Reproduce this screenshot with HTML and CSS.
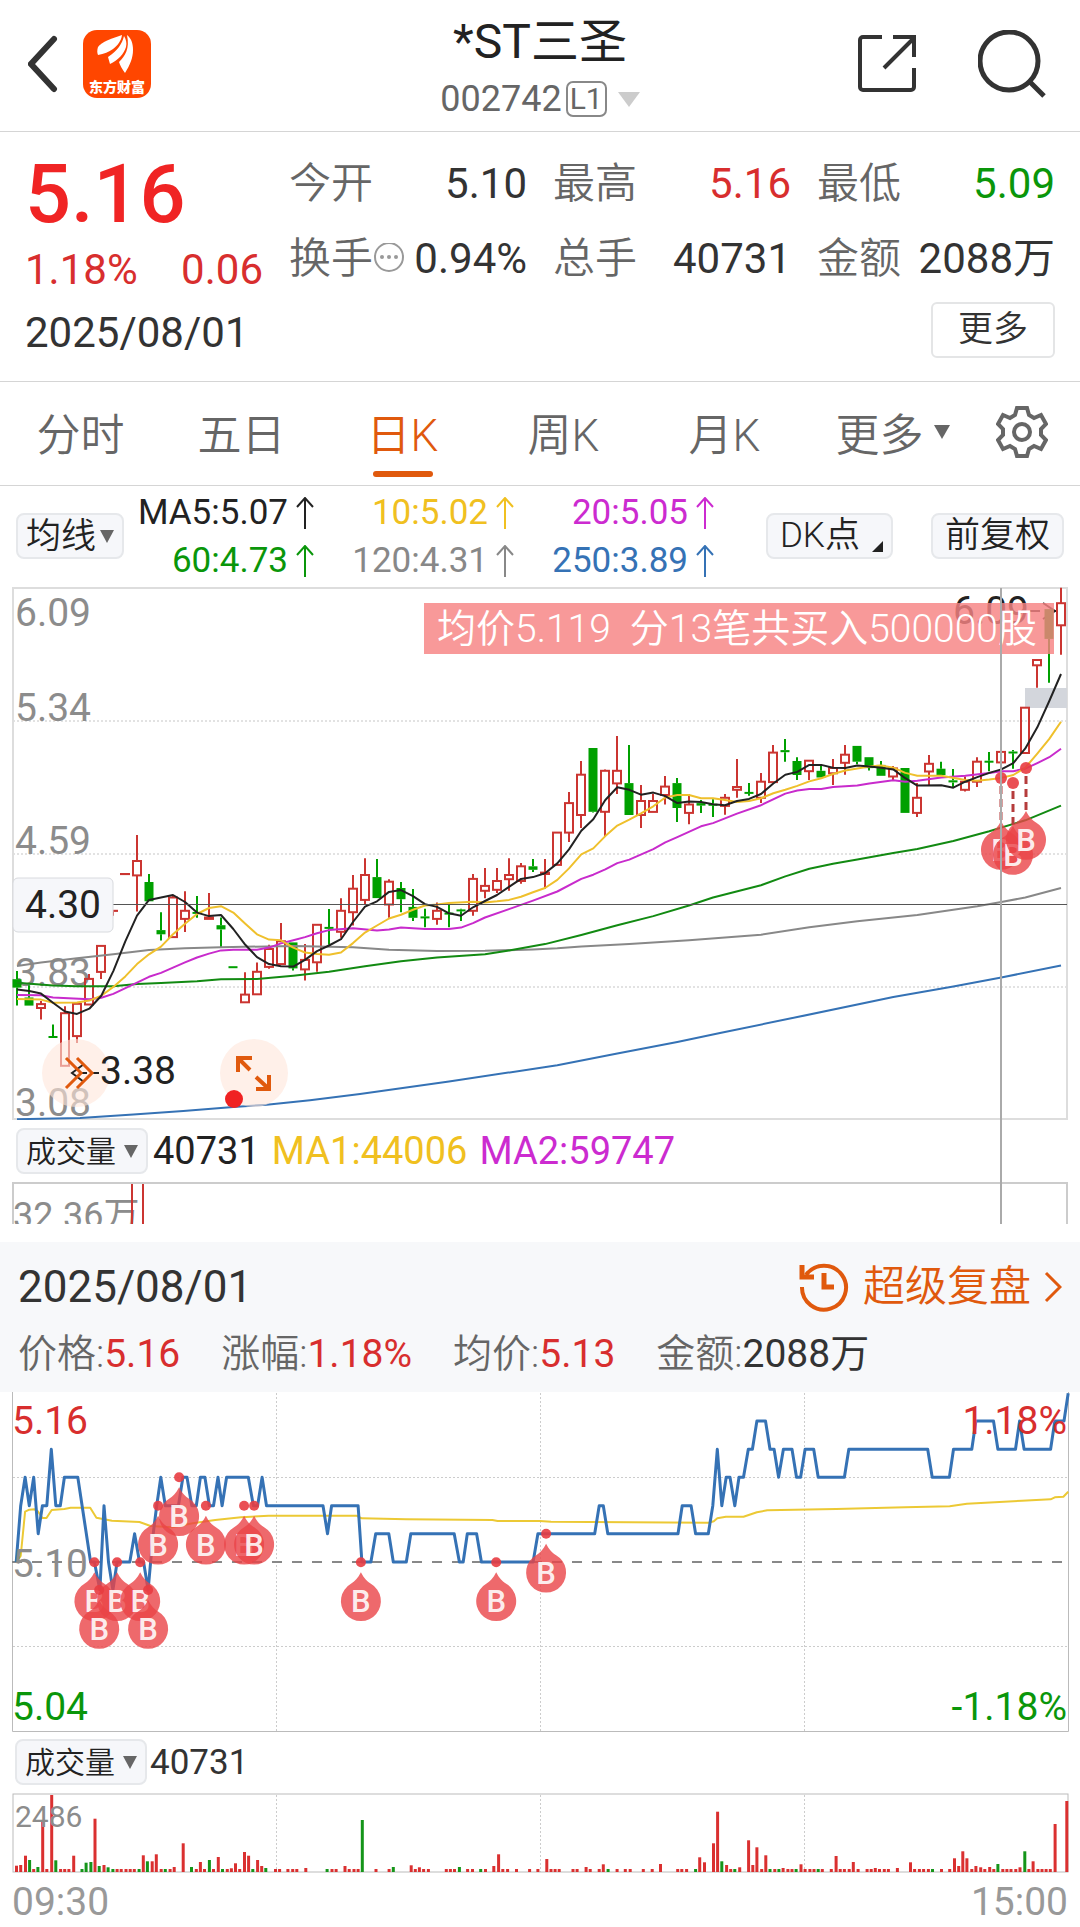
FILE: index.html
```html
<!DOCTYPE html>
<html lang="zh-CN">
<head>
<meta charset="utf-8">
<meta name="viewport" content="width=device-width, initial-scale=1">
<title>*ST三圣 002742</title>
<link rel="stylesheet" href="styles.css">
</head>
<body>
<header class="topbar">
  <div class="topbar-left">
    <button class="icon-btn" aria-label="返回"><svg width="30" height="60" viewBox="3 0 30 60"><path d="M29 5 6 30l23 25" fill="none" stroke="#333" stroke-width="6" stroke-linecap="round"/></svg></button>
    <svg class="logo" width="68" height="68" viewBox="0 0 68 68" role="img" aria-label="东方财富">
      <rect width="68" height="68" rx="14" fill="#ff4600"/>
      <path d="M39 5C30 8 18 12 15 17c-1 3-1 6 0 8 6-1 11-3 15-6 5-4 8-8 9-14z" fill="#fff"/>
      <path d="M41 6c-2 8-6 14-16 21l2 7c8-4 14-10 16-17 1-4 0-8-2-11z" fill="#fff"/>
      <path d="M44 5c4 3 6 8 6 15 0 8-3 15-8 23-3-4-5-8-6-11 6-6 11-13 8-27z" fill="#fff"/>
      <text x="34" y="62" text-anchor="middle" class="logo-text">东方财富</text>
    </svg>
  </div>
  <div class="topbar-title">
    <h1>*ST三圣</h1>
    <button class="code-btn"><span>002742</span><span class="level">L1</span><svg width="22" height="15" viewBox="0 0 22 15"><path d="M0 0h22L11 15z" fill="#ccc"/></svg></button>
  </div>
  <div class="topbar-right">
    <button class="icon-btn" aria-label="分享"><svg width="58" height="58" viewBox="0 0 58 58"><path d="M24 2H5a3 3 0 0 0-3 3v47a3 3 0 0 0 3 3h48a3 3 0 0 0 3-3V33M35 2h21v20M26 33 56 3" fill="none" stroke="#333" stroke-width="4"/></svg></button>
    <button class="icon-btn" aria-label="搜索"><svg width="68" height="68" viewBox="0 0 68 68"><circle cx="31" cy="31" r="29" fill="none" stroke="#333" stroke-width="5"/><path d="M51 51l15 15" stroke="#333" stroke-width="5"/></svg></button>
  </div>
</header>

<section class="quote">
  <div class="quote-main">
    <div class="quote-price">
      <strong>5.16</strong>
      <div class="change"><span>1.18%</span><span>0.06</span></div>
    </div>
    <div class="stats">
      <div><span class="name">今开</span><span>5.10</span></div>
      <div><span class="name">最高</span><span class="up">5.16</span></div>
      <div><span class="name">最低</span><span class="down">5.09</span></div>
      <div><span class="name">换手<svg width="32" height="32" viewBox="0 0 32 32"><circle cx="16" cy="14" r="14" fill="none" stroke="#999" stroke-width="2"/><g fill="#999"><circle cx="9" cy="14" r="2"/><circle cx="16" cy="14" r="2"/><circle cx="23" cy="14" r="2"/></g></svg></span><span>0.94%</span></div>
      <div><span class="name">总手</span><span>40731</span></div>
      <div><span class="name">金额</span><span>2088万</span></div>
    </div>
  </div>
  <div class="quote-foot"><time>2025/08/01</time><button class="more-btn">更多</button></div>
</section>

<nav class="tabs">
  <button>分时</button>
  <button>五日</button>
  <button class="active">日K</button>
  <button>周K</button>
  <button>月K</button>
  <button class="tab-more">更多<svg width="16" height="14" viewBox="0 0 16 14"><path d="M0 0h16L8 14z" fill="#666"/></svg></button>
  <button class="gear" aria-label="设置"><svg width="52" height="52" viewBox="-26 -26 52 52" fill="none" stroke="#666" stroke-width="4"><path d="M-5-24H5L7-17L12-14L19-17L24-8L19-3V3L24 8L19 17L12 14L7 17L5 24H-5L-7 17L-12 14L-19 17L-24 8L-19 3V-3L-24-8L-19-17L-12-14L-7-17Z"/><circle r="8"/></svg></button>
</nav>

<section class="indicators">
  <label class="picker"><select class="wide" aria-label="主图指标"><option>均线</option></select><svg width="14" height="13" viewBox="0 0 14 13"><path d="M0 0h14L7 13z" fill="#666"/></svg></label>
  <div class="ma">
    <span class="black">MA5:5.07<svg class="arrow" viewBox="0 0 18 32"><path d="M9 32V1M1 10l8-9 8 9"/></svg></span>
    <span class="yellow">10:5.02<svg class="arrow" viewBox="0 0 18 32"><path d="M9 32V1M1 10l8-9 8 9"/></svg></span>
    <span class="magenta">20:5.05<svg class="arrow" viewBox="0 0 18 32"><path d="M9 32V1M1 10l8-9 8 9"/></svg></span>
    <span class="down">60:4.73<svg class="arrow" viewBox="0 0 18 32"><path d="M9 32V1M1 10l8-9 8 9"/></svg></span>
    <span class="gray">120:4.31<svg class="arrow" viewBox="0 0 18 32"><path d="M9 32V1M1 10l8-9 8 9"/></svg></span>
    <span class="blue">250:3.89<svg class="arrow" viewBox="0 0 18 32"><path d="M9 32V1M1 10l8-9 8 9"/></svg></span>
  </div>
  <div class="chips">
    <button class="chip dk">DK点<svg width="11" height="11" viewBox="0 0 11 11"><path d="M11 0v11H0z" fill="#222"/></svg></button>
    <button class="chip">前复权</button>
  </div>
</section>

<section class="k-area">
  <svg class="chart" viewBox="0 0 1080 540" aria-label="日K线图">
    <g stroke="#e2e2e2" stroke-width="2" stroke-dasharray="2 2"><path d="M13 141H1067M13 274H1067M13 407H1067"/></g>
    <rect x="13" y="8" width="1054" height="531" fill="none" stroke="#ddd" stroke-width="2"/>
    <g class="axis"><text x="15" y="46">6.09</text><text x="15" y="141">5.34</text><text x="15" y="274">4.59</text><text x="15" y="406">3.83</text><text x="15" y="536">3.08</text></g>
    <rect x="1025" y="108" width="42" height="20" fill="#d3d6dc"/>
    <text class="mark" x="953" y="44">6.09</text>
    <path d="M1030 31h10M1043 23l12 8-12 8M1049 31h8" fill="none" stroke="#222" stroke-width="2"/>
    <g id="candles"></g>
    <g id="averages"></g>
    <rect x="13" y="324" width="1054" height="1" fill="#555"/>
    <rect x="13" y="298" width="100" height="54" rx="5" fill="#f6f7fa" stroke="#d8dade"/>
    <text class="mark" x="25" y="338">4.30</text>
    <circle cx="76" cy="493" r="34" fill="#ffe6da" fill-opacity=".6"/>
    <path d="M84 484l-12 9 12 9M79 493h8M92 493h7" fill="none" stroke="#222" stroke-width="2"/>
    <path d="M66 478l15 15-15 15M77 478l15 15-15 15" fill="none" stroke="#e0590d" stroke-width="3"/>
    <text class="mark" x="100" y="504">3.38</text>
    <circle cx="254" cy="493" r="34" fill="#ffe6da" fill-opacity=".6"/>
    <path d="M252 478h-14v14M238 478l12 12M256 509h13v-14M269 509l-13-12" fill="none" stroke="#e0590d" stroke-width="4"/>
    <circle cx="234" cy="519" r="9" fill="#f02222"/>
    <rect x="424" y="23" width="630" height="51" fill="#f78282" fill-opacity=".82"/>
    <text x="437" y="62" class="banner">均价5.119&#160; 分13笔共买入500000股</text>
    <g id="k-flags"></g>
  </svg>
  <div class="volume-head">
    <label class="picker"><select aria-label="副图指标"><option>成交量</option></select><svg width="14" height="13" viewBox="0 0 14 13"><path d="M0 0h14L7 13z" fill="#666"/></svg></label>
    <span class="black">40731</span><span class="yellow">MA1:44006</span><span class="magenta">MA2:59747</span>
  </div>
  <svg class="chart" viewBox="0 0 1080 42" aria-label="日成交量">
    <path d="M13 42V1H1067V42" fill="none" stroke="#ccc" stroke-width="2"/>
    <text x="13" y="46" class="axis scale">32.36万</text>
    <path d="M132 2V42M143 2V42" stroke="#cb3531" stroke-width="2"/>
  </svg>
  <div class="crosshair"></div>
</section>

<section class="replay">
  <div class="replay-head">
    <time>2025/08/01</time>
    <a href="#replay"><svg width="50" height="50" viewBox="0 0 50 50" fill="none" stroke="#e0590d" stroke-width="4"><path d="M3 25A22 22 0 1 0 7 13"/><path d="M3 3v12h12" stroke-width="5"/><path d="M25 11v14h10" stroke-width="5"/></svg><span>超级复盘</span><svg width="18" height="32" viewBox="0 0 18 32"><path d="M2 2l14 14L2 30" fill="none" stroke="#e0590d" stroke-width="3"/></svg></a>
  </div>
  <div class="replay-data">
    <span>价格:<b class="up">5.16</b></span><span>涨幅:<b class="up">1.18%</b></span><span>均价:<b class="up">5.13</b></span><span>金额:<b>2088万</b></span>
  </div>
</section>

<section class="minute">
  <svg class="chart" viewBox="0 2 1080 340" aria-label="分时图">
    <g stroke="#ccc" stroke-width="1" stroke-dasharray="2 2"><path d="M13 87.500H1067M13 256.500H1067M276.500 3V341M540.500 3V341M804.500 3V341"/></g>
    <path d="M12.500 2V341.500H1068.500V2" fill="none" stroke="#bbb"/>
    <path d="M12 172H1067" stroke="#888" stroke-width="2" stroke-dasharray="10 10"/>
    <g id="minute-lines"></g>
    <text x="12" y="187" class="axis">5.10</text>
    <g id="minute-flags"></g>
    <text x="12" y="44" class="t-up">5.16</text><text x="1067" y="44" text-anchor="end" class="t-up">1.18%</text>
    <text x="12" y="330" class="t-down">5.04</text><text x="1067" y="330" text-anchor="end" class="t-down">-1.18%</text>
  </svg>
  <div class="volume-head small">
    <label class="picker"><select aria-label="分时副图指标"><option>成交量</option></select><svg width="14" height="13" viewBox="0 0 14 13"><path d="M0 0h14L7 13z" fill="#666"/></svg></label>
    <span>40731</span>
  </div>
  <svg class="chart" viewBox="0 0 1080 81" aria-label="分时成交量">
    <path d="M276.500 3V80M540.500 3V80M804.500 3V80" stroke="#ccc" stroke-dasharray="2 2"/>
    <rect x="13" y="2" width="1055" height="78" fill="none" stroke="#bbb"/>
    <g id="bars"></g>
    <text x="15" y="35" class="axis tiny">2486</text>
  </svg>
  <div class="times"><span>09:30</span><span>15:00</span></div>
</section>
<script src="chart.js"></script>
</body>
</html>
```

FILE: styles.css
```css
* { box-sizing: border-box; }
body {
  margin: 0;
  background: #fff;
  color: #333;
  font-family: Roboto, "Noto Sans CJK SC", sans-serif;
  font-size: 42px;
}
button, select {
  margin: 0;
  padding: 0;
  border: 0;
  background: none;
  color: inherit;
  font: inherit;
}
svg { display: block; flex: none; }
select { appearance: none; }

.black { color: #222; }
.yellow { color: #f0c020; }
.magenta { color: #cc2bd0; }
.gray { color: #888; }
.blue { color: #3572b5; }
.up { color: #d82e2e; }
.down { color: #0a960a; }

.topbar {
  display: grid;
  grid-template-columns: 1fr auto 1fr;
  height: 132px;
  padding: 0 28px;
  border-bottom: 1px solid #d5d5d5;
}
.topbar-left, .topbar-right { display: flex; align-items: center; height: 128px; }
.topbar-left { gap: 25px; }
.topbar-right { justify-content: flex-end; gap: 62px; padding-right: 6px; }
.topbar-title { display: flex; flex-direction: column; align-items: center; padding-top: 12px; }
.topbar-title h1 { margin: 0; font-size: 48px; line-height: 60px; font-weight: 400; color: #222; }
.code-btn { display: flex; align-items: center; height: 54px; font-size: 36px; color: #666; }
.level { margin: 0 11px 0 4px; padding: 0 2px; border: 2px solid #888; border-radius: 7px; font-size: 30px; line-height: 32px; }
.logo-text { font-size: 14px; font-weight: 900; fill: #fff; }

.quote { padding: 14px 25px 23px; border-bottom: 1px solid #d5d5d5; }
.quote-main { display: grid; grid-template-columns: minmax(0, 238fr) minmax(0, 766fr); column-gap: 26px; }
.quote-price { padding-top: 6px; color: #d82e2e; }
.quote-price strong { display: block; font-size: 81px; line-height: 86px; font-weight: 500; color: #f02424; }
.change { display: flex; justify-content: space-between; line-height: 64px; }
.stats { display: grid; grid-template-columns: repeat(3, 1fr); column-gap: 26px; grid-auto-rows: 75px; align-content: start; }
.stats > div { display: flex; align-items: center; justify-content: space-between; line-height: 60px; }
.name { display: flex; align-items: center; color: #666; font-weight: 350; }
.quote-foot { display: flex; justify-content: space-between; align-items: center; height: 56px; }
.quote-foot time { padding-top: 5px; }
.more-btn { width: 124px; height: 56px; border: 2px solid #e4e5e6; border-radius: 6px; font-size: 35px; font-weight: 350; line-height: 48px; }

.tabs {
  display: grid;
  grid-template-columns: repeat(5, 161fr) 175fr 83fr;
  height: 104px;
  padding-right: 17px;
  border-bottom: 1px solid #d5d5d5;
  color: #666;
  font-size: 44px;
}
.tabs button { position: relative; padding-bottom: 3px; font-weight: 350; }
.tabs .active { color: #e0590d; }
.tabs .active::after { content: ""; position: absolute; left: 50%; bottom: 8px; width: 60px; height: 6px; margin-left: -30px; border-radius: 3px; background: #e0590d; }
.tabs .tab-more, .tabs .gear { display: flex; align-items: center; justify-content: center; gap: 10px; }

.indicators { display: flex; align-items: center; height: 94px; padding: 6px 16px 0; font-size: 35px; }
.picker { display: flex; align-items: center; gap: 8px; height: 46px; padding: 0 8px; border: 2px solid #e6e8eb; border-radius: 8px; background: #f6f7fa; color: #222; font-size: 30px; font-weight: 350; }
.picker .wide { font-size: 35px; }
.indicators .picker { gap: 3px; }
.ma { display: grid; grid-template-columns: repeat(3, 200px); justify-content: end; flex: none; width: 590px; padding-top: 2px; }
.ma span { display: flex; justify-content: flex-end; align-items: center; gap: 8px; line-height: 48px; }
.arrow { width: 18px; height: 32px; fill: none; stroke: currentColor; stroke-width: 2; }
.chips { display: flex; gap: 38px; margin-left: auto; }
.chip { height: 46px; padding: 0 12px; border: 2px solid #e6e8eb; border-radius: 8px; background: #f6f7fa; color: #222; line-height: 42px; font-weight: 350; }
.dk { display: flex; align-items: flex-end; gap: 12px; padding-right: 8px; }
.dk svg { margin-bottom: 5px; }

.k-area { position: relative; }
.chart { width: 100%; height: auto; font-size: 39px; }
.crosshair { position: absolute; top: 8px; bottom: 0; left: 92.6%; width: 2px; background: #aaa; }
.axis { fill: #8c8c8c; }
.scale { font-size: 36px; }
.tiny { font-size: 30px; }
.mark { fill: #222; }
.banner { fill: #fff; font-weight: 350; }
.t-up { fill: #d82e2e; }
.t-down { fill: #0a960a; }
.flag-text { fill: #fff; fill-opacity: .9; font-size: 31px; font-weight: 500; text-anchor: middle; }
.volume-head { display: flex; align-items: center; gap: 12px; height: 62px; padding: 0 16px; font-size: 38px; }
.volume-head .picker { margin-right: -7px; }
.volume-head.small { height: 60px; padding-left: 15px; font-size: 35px; }
.volume-head.small .picker { margin-right: -9px; }

.replay { margin-top: 18px; padding: 15px 18px 0; background: #f7f8fa; }
.replay-head { display: flex; justify-content: space-between; align-items: center; height: 60px; font-size: 44px; }
.replay-head a { display: flex; align-items: center; color: #e0590d; font-size: 42px; line-height: 56px; font-weight: 350; text-decoration: none; }
.replay-head a span { margin: 0 13px 0 14px; }
.replay-data { display: flex; gap: 41px; height: 75px; font-size: 39px; line-height: 75px; color: #666; font-weight: 350; }
.replay-data b { font-weight: 400; }
.replay-data b:not(.up) { color: #333; }
.times { display: flex; justify-content: space-between; height: 54px; padding: 5px 12px 0; color: #999; font-size: 39px; line-height: 49px; }
```

FILE: chart.js
```js
const RED = '#cb3531', GREEN = '#00a000';
const put = (id, html) => { document.getElementById(id).innerHTML = html; };
const f = n => n.toFixed(1);

/* Daily candles: body top, body bottom, high, low, rise/fall. */
const candles = `1138 1162 1115 1213 g,1190 1213 1155 1213 g,1209 1220 1200 1253 r,1300 1305 1267 1305 g,1235 1385 1215 1385 r,1208 1300 1208 1320 r,1137 1210 1123 1210 r,1043 1117 1043 1137 r,943 943 943 957 r,838 838 838 838 r,801 842 727 945 r,861 916 838 916 g,998 1010 947 1028 g,905 1018 900 1018 r,943 966 887 1003 r,946 951 901 963 g,962 966 892 966 r,984 996 962 1048 g,1101 1106 1101 1106 g,1182 1204 1118 1204 r,1117 1181 1090 1181 r,1052 1103 1040 1108 r,1030 1095 978 1095 r,1033 1107 1033 1113 g,1083 1110 1038 1142 r,983 1090 983 1117 r,989 994 938 1040 g,943 1003 907 1020 r,880 947 841 985 r,841 912 793 925 r,847 907 795 907 g,860 925 853 963 r,878 910 861 947 g,932 963 881 972 g,959 963 937 990 g,943 966 919 983 r,948 953 925 990 g,939 944 937 972 g,852 943 838 957 r,872 886 821 907 r,858 883 821 892 r,841 853 793 886 r,816 858 807 866 r,816 826 795 832 g,834 838 795 880 r,720 812 720 812 r,636 720 604 747 r,555 670 516 707 r,479 661 479 663 g,544 661 540 730 r,544 580 445 610 r,579 670 470 670 g,630 670 584 707 r,630 661 610 661 r,589 613 559 640 r,579 650 564 690 g,640 664 610 696 r,636 643 627 664 g,638 643 625 676 g,621 644 610 669 r,590 598 510 621 r,604 609 579 615 g,575 621 550 636 r,492 576 470 576 r,485 491 453 518 g,516 556 505 570 g,515 545 515 570 r,544 563 530 563 g,536 551 510 584 r,498 521 470 555 r,473 518 473 525 g,505 536 505 543 g,527 558 516 558 g,537 560 530 572 r,536 664 536 664 g,621 664 579 676 r,524 546 499 584 r,538 556 518 556 g,571 577 539 590 g,575 598 560 603 r,518 575 505 590 r,515 519 490 545 g,490 520 490 520 r,489 494 485 538 g,364 493 364 493 r,228 243 228 307 r,83 168 83 293 g,66 129 22 213 r`;
const ky = v => v * 0.3508;
put('candles', candles.split(',').map((row, i) => {
  const [a, b, h, l, c] = row.split(' ');
  const x = 17 + 12 * i, t = ky(+a), u = ky(+b), hi = ky(+h), lo = ky(+l);
  const color = c === 'g' ? GREEN : RED;
  const wick = `<path d="M${x} ${f(hi)}V${f(t)}M${x} ${f(u)}V${f(lo)}" stroke="${color}" stroke-width="2"/>`;
  const body = c === 'g'
    ? `<rect x="${x - 4.5}" y="${f(t)}" width="9" height="${f(Math.max(u - t, 2))}" fill="${color}"/>`
    : `<rect x="${x - 4}" y="${f(t)}" width="8" height="${f(Math.max(u - t, .1))}" fill="none" stroke="${color}" stroke-width="2"/>`;
  return wick + body;
}).join(''));

/* Moving averages as x,y pairs. */
const averages = {
  '#888': '51,1100 123,1090 231,1078 340,1067 447,1055 555,1050 663,1047 880,1043 1059,1047 1167,1054 1311,1058 1455,1057 1599,1053 1672,1050 1744,1045 1888,1038 2067,1027 2283,1011 2428,990 2572,973 2752,955 2932,930 3004,918 3076,905 3183,878',
  '#3572b5': '51,1537 240,1534 400,1524 550,1514 700,1502 800,1496 930,1483 1080,1465 1347,1430 1672,1383 1852,1350 2032,1317 2160,1291 2392,1246 2680,1189 2860,1159 3004,1133 3183,1099',
  '#128a12': '51,1148 159,1156 231,1158 340,1158 411,1152 483,1149 591,1144 663,1138 771,1137 880,1128 987,1117 1095,1101 1203,1087 1311,1076 1455,1067 1527,1056 1635,1038 1744,1012 1852,984 1960,958 2067,928 2139,905 2283,870 2356,845 2428,823 2499,809 2572,797 2680,778 2752,767 2860,744 2968,716 3076,685 3183,643',
  '#c82bcc': '51,1183 123,1184 159,1190 268,1195 304,1191 340,1180 411,1148 447,1131 483,1120 519,1105 555,1090 591,1076 627,1065 663,1056 700,1054 771,1054 807,1048 843,1036 880,1027 915,1018 951,1007 987,998 1059,993 1131,999 1167,996 1203,991 1275,995 1347,995 1383,991 1419,978 1455,962 1527,938 1599,914 1672,888 1744,852 1780,840 1816,825 1852,807 1888,797 1960,767 1996,748 2032,733 2103,702 2139,693 2211,666 2283,642 2356,609 2392,600 2428,596 2464,596 2499,590 2572,586 2608,580 2680,571 2716,575 2752,572 2824,563 2896,558 2968,550 3004,545 3040,545 3076,538 3112,522 3148,505 3183,481',
  '#efc02c': '51,1194 123,1196 159,1205 231,1204 268,1199 304,1185 340,1160 376,1130 411,1095 447,1067 483,1045 519,1010 555,980 591,952 627,935 663,930 700,948 736,980 771,1010 807,1025 843,1027 880,1048 915,1062 951,1066 987,1068 1023,1062 1059,1035 1095,1005 1131,985 1167,965 1203,954 1239,940 1275,928 1311,925 1347,921 1419,917 1455,919 1491,916 1527,912 1563,903 1599,890 1635,878 1672,855 1707,822 1744,782 1780,765 1816,730 1852,700 1888,683 1923,665 1960,645 1996,620 2032,613 2067,613 2103,622 2139,622 2175,627 2211,633 2247,630 2283,622 2320,608 2356,598 2392,587 2428,574 2464,565 2499,553 2536,543 2572,537 2608,532 2644,529 2680,535 2716,550 2752,558 2824,558 2896,570 2932,572 2968,569 3004,564 3040,556 3076,535 3112,495 3148,453 3183,404',
  '#222': '51,1167 88,1172 123,1179 159,1205 195,1230 231,1237 268,1222 304,1185 340,1115 376,1030 411,957 447,912 519,898 555,918 591,948 627,958 663,955 700,995 736,1040 771,1075 807,1095 843,1101 880,1102 915,1083 951,1058 987,1042 1023,1024 1059,975 1095,931 1131,916 1167,889 1203,884 1239,901 1275,924 1311,932 1347,950 1383,957 1419,933 1455,915 1491,898 1527,875 1563,852 1599,847 1635,836 1672,808 1707,768 1744,715 1780,682 1816,627 1852,591 1888,598 1923,612 1960,606 1996,616 2032,636 2067,631 2103,633 2139,639 2175,642 2211,630 2247,624 2283,610 2320,580 2356,555 2392,547 2428,527 2464,527 2499,535 2536,536 2572,529 2608,532 2644,535 2680,540 2716,565 2752,586 2824,585 2860,592 2896,575 2932,562 2968,550 3004,540 3040,522 3076,480 3112,420 3148,345 3183,268'
};
const line = (pts, sx, sy, color, w) =>
  `<polyline fill="none" stroke="${color}" stroke-width="${w}" stroke-linejoin="round" points="${pts.split(' ').map(p => {
    const [x, y] = p.split(',');
    return f(x * sx) + ',' + f(y * sy);
  }).join(' ')}"/>`;
put('averages', Object.entries(averages).map(([c, p]) => line(p, 1 / 3, 0.3508, c, 2)).join(''));

/* Buy marks: a dot on the price and a drop-shaped flag under it. */
const drop = (x, cy) =>
  `<g transform="translate(${f(x)} ${f(cy)})"><path d="M0-29C3-23 6-20 10-17.500A20 20 0 1 1-10-17.500C-6-20-3-23 0-29Z" fill="#ea4347" fill-opacity=".8"/><text class="flag-text" y="11">B</text></g>`;
const dot = (x, y, r) => `<circle cx="${f(x)}" cy="${f(y)}" r="${r}" fill="#e83c41" fill-opacity=".9"/>`;

put('k-flags', [[1001, 198, 270], [1013, 203, 275], [1026, 188, 260]].map(([x, y, cy]) =>
  dot(x, y, 6) + `<path d="M${x} ${y + 8}V${cy - 27}" stroke="#b53c3c" stroke-width="3" stroke-dasharray="8 5"/>` + drop(x, cy)).join(''));

/* Minute chart. */
const price = '47,516 60,347 73,262 85,347 98,262 111,431 123,347 136,347 149,178 162,347 175,347 187,262 226,262 263,516 274,516 290,600 302,347 315,516 328,600 340,516 377,516 391,431 405,516 417,516 430,600 445,431 455,347 467,262 480,347 518,347 531,262 543,262 557,347 570,347 582,262 595,262 608,347 620,347 633,262 645,347 658,262 721,262 736,347 748,347 761,262 774,347 938,347 951,431 963,347 1040,347 1051,516 1077,516 1091,431 1129,431 1142,516 1180,516 1193,431 1319,431 1334,516 1345,516 1357,431 1384,431 1398,516 1548,516 1562,431 1727,431 1740,347 1752,347 1765,431 1969,431 1981,347 2007,347 2020,431 2057,431 2070,347 2083,178 2096,347 2109,262 2120,262 2134,347 2146,262 2159,262 2173,178 2185,178 2198,93 2223,93 2236,178 2248,178 2261,262 2275,178 2300,178 2313,262 2325,262 2338,178 2363,178 2376,262 2452,262 2465,178 2694,178 2707,262 2757,262 2769,178 2822,178 2834,93 2885,93 2898,178 2949,178 2961,93 2974,178 3051,178 3063,93 3090,93 3102,10';
const mean = '47,516 60,498 73,365 85,359 100,358 111,365 123,384 135,384 150,360 187,357 205,353 262,353 280,383 325,392 405,396 437,408 500,412 560,400 625,390 700,382 780,377 1035,377 1050,385 1180,388 1430,390 1445,393 1568,393 1600,395 2058,398 2073,394 2083,385 2108,380 2159,380 2198,367 2228,361 2428,357 2628,352 2758,349 2808,341 2968,332 3051,328 3063,322 3088,320 3102,305';
const mx = 1 / 2.904, my = 1 / 3;
put('minute-lines', line(mean, mx, my, '#ecc935', 2) + line(price, mx, my, '#3572b5', 3));
put('minute-flags', [[274, 517], [340, 517], [407, 517], [288, 600], [430, 600], [459, 347], [520, 262], [598, 347], [709, 347], [738, 347], [1048, 517], [1441, 517], [1586, 431]]
  .map(([x, y]) => dot(x * mx, y * my, 5) + drop(x * mx, y * my + 39)).join(''));

/* Minute volume: position, height (9 when left out), "g" for a falling minute. */
const bars = '24:19 30:21 37:49 43:36g 49 55:15g 62:156 68 75:231 81:35g 88 94 100 107:49 119:9g 125:28g 132:30g 138:160 144:18g 151:21 157:14g 164:9g 170 176 183 189 195 202:9g 208:50 214:32g 221:32 227:53 234 240:9g 247 253:15 266:86 278:15g 285 291:30 297 304:36g 310 317:45 323:9g 330 336:11 342:26 348 355:60 361:49 367:9g 374:36 380:18 386:12g 400 406 418 425 431 444:12 475:9g 482 488 501:18 507 514 520 526:156g 546 565 571:15g 597:20 603 609:14 615 622 648 654 660 667:15g 679 686 698:9g 705 717:18 724:53 730 737 750 769 781 794:39 800 806 812 832 838 851:15 857 870 876:23 883:9g 896 908 915 934 947 959:24 984 990 997 1010:9g 1016:44 1023:29 1036:86 1042:181 1048:32g 1055:21 1061 1067:9g 1074:14 1087:95 1093:21 1099:74 1106 1112:50 1118:9g 1125 1131:9g 1137:12 1144 1150 1156:9g 1163:23 1169 1176 1182 1188:9g 1194 1207 1214:48 1220 1226 1233 1239:30 1246 1259 1265 1271:12 1277 1284 1290 1303:12 1322:29 1328 1335 1341 1348 1354:9g 1367 1379 1386:41 1392:18 1398:62 1404:41 1411 1417:18 1424:14 1430 1437:15 1443 1449:24g 1456 1462 1468 1475 1481:14 1488:62g 1494 1500:32 1507 1513 1519 1525 1532:144 1549:213';
put('bars', bars.split(' ').map(b => {
  const [x, v = '9'] = b.split(':');
  const h = parseInt(v, 10) / 3;
  return `<rect x="${f(x / 1.452 - 1.5)}" y="${f(80 - h)}" width="3" height="${f(h)}" fill="${v.endsWith('g') ? '#15951a' : '#da3030'}"/>`;
}).join(''));
```
